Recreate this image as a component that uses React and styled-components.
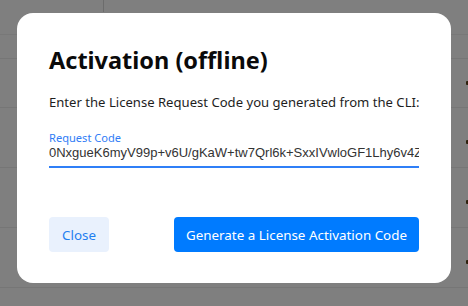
import React from "react";
import styled, { createGlobalStyle } from "styled-components";

const Global = createGlobalStyle`
  html, body { margin: 0; padding: 0; }
  body { width: 468px; height: 306px; overflow: hidden; font-family: "Noto Sans", "Open Sans", sans-serif; }
  * { box-sizing: border-box; }
`;

const Page = styled.div`
  position: relative;
  width: 468px;
  height: 306px;
  background: #ffffff;
  overflow: hidden;
`;

const TopBar = styled.div`
  height: 35px;
  background: #fefeff;
  border-bottom: 1px solid #f0f0f0;
  display: flex;
  align-items: flex-start;
  padding-left: 103px;
`;

const TopDivider = styled.div`
  width: 1px;
  height: 12px;
  background: #d8d8d8;
`;

const TableRow = styled.div`
  height: ${(p) => p.$h}px;
  border-bottom: 1px solid #ececec;
  display: flex;
  align-items: center;
  justify-content: flex-end;
`;

const RowMark = styled.span`
  width: 2px;
  height: 4px;
  margin-top: ${(p) => p.$dy || 0}px;
  background: #5a4018;
  border-radius: 1px 0 0 1px;
`;

const Overlay = styled.div`
  position: absolute;
  inset: 0;
  background: rgba(0, 0, 0, 0.5);
  display: flex;
  justify-content: center;
  align-items: flex-start;
  padding-top: 13px;
`;

const Dialog = styled.div`
  width: 434px;
  background: #ffffff;
  border-radius: 16px;
  padding: 32px 32px 31px;
  display: flex;
  flex-direction: column;
`;

const Title = styled.h2`
  margin: 0;
  font-size: 23.5px;
  line-height: 30px;
  font-weight: 700;
  color: #0a0a0a;
`;

const Description = styled.p`
  margin: 17px 0 0;
  font-size: 13.1px;
  line-height: 20px;
  color: #1e1e1e;
  white-space: nowrap;
`;

const Field = styled.label`
  margin-top: 18px;
  display: flex;
  flex-direction: column;
`;

const FieldLabel = styled.span`
  font-size: 11.1px;
  line-height: 15px;
  color: #2f7cf6;
`;

const CodeInput = styled.input`
  border: none;
  border-bottom: 2px solid #2f7ff7;
  outline: none;
  padding: 0 0 7px;
  margin: 0;
  font-family: "Liberation Sans", Arial, sans-serif;
  font-size: 13px;
  line-height: 14px;
  height: 23px;
  color: #333333;
  background: transparent;
  width: 100%;
`;

const Footer = styled.div`
  margin-top: 49px;
  display: flex;
  justify-content: space-between;
  align-items: center;
`;

const Button = styled.button`
  height: 35px;
  padding: 0 ${(p) => (p.$primary ? 12 : 13)}px;
  border: none;
  border-radius: 4px;
  font-family: "Noto Sans", "Open Sans", sans-serif;
  font-size: 13.4px;
  cursor: pointer;
  background: ${(p) => (p.$primary ? "#007bff" : "#e9f1fd")};
  color: ${(p) => (p.$primary ? "#ffffff" : "#1f7ff0")};
`;

export default function App() {
  const code =
    "0NxgueK6myV99p+v6U/gKaW+tw7Qrl6k+SxxIVwloGF1Lhy6v4ZIlkq9Tz3wRm8";
  return (
    <>
      <Global />
      <Page>
        <TopBar>
          <TopDivider />
        </TopBar>
        <TableRow $h={24} />
        <TableRow $h={49}>
          <RowMark $dy={0} />
        </TableRow>
        <TableRow $h={60}>
          <RowMark $dy={8} />
        </TableRow>
        <TableRow $h={60}>
          <RowMark $dy={8} />
        </TableRow>
        <TableRow $h={60}>
          <RowMark $dy={8} />
        </TableRow>
        <Overlay>
          <Dialog>
            <Title>Activation (offline)</Title>
            <Description>
              Enter the License Request Code you generated from the CLI:
            </Description>
            <Field>
              <FieldLabel>Request Code</FieldLabel>
              <CodeInput readOnly value={code} />
            </Field>
            <Footer>
              <Button>Close</Button>
              <Button $primary>Generate a License Activation Code</Button>
            </Footer>
          </Dialog>
        </Overlay>
      </Page>
    </>
  );
}
